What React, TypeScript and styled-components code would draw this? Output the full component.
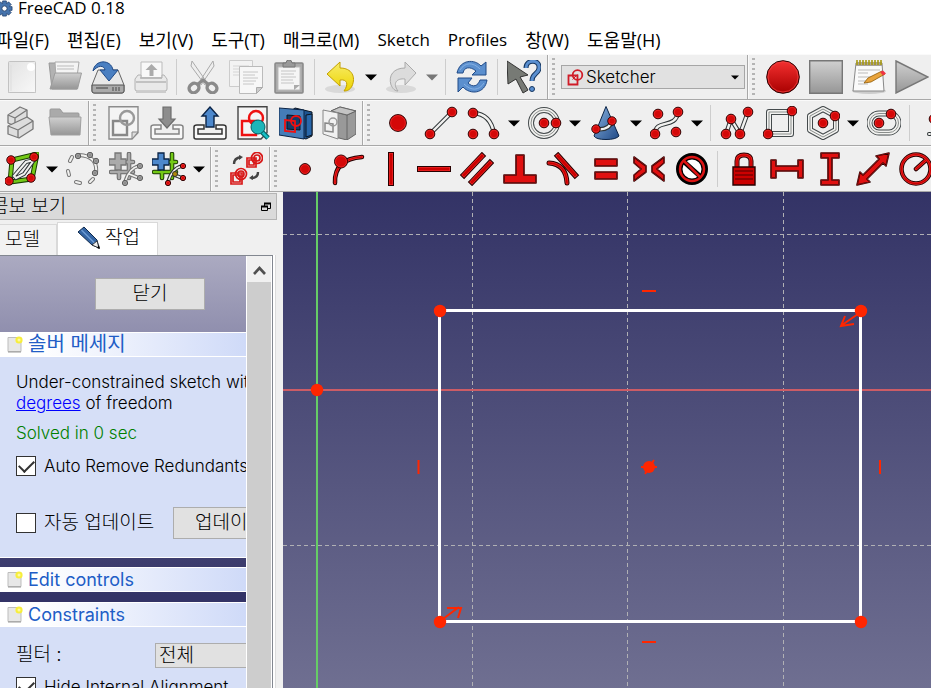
import React from "react";
import styled, { createGlobalStyle, css } from "styled-components";

const GlobalStyle = createGlobalStyle`
  * { box-sizing: border-box; }
  html, body, #root { height: 100%; margin: 0; }
  body { overflow: hidden; background: #fff; }
  button, input, select { font: inherit; color: inherit; margin: 0; }
`;

const uiFont = `"Open Sans", "Noto Sans CJK KR", sans-serif`;
const panelFont = `Inter, "Noto Sans CJK KR", sans-serif`;

const Window = styled.div`
  display: flex;
  flex-direction: column;
  height: 100vh;
  overflow: hidden;
  color: #000;
  font-family: ${uiFont};
  font-size: 17px;
`;

const TitleBar = styled.header`
  display: flex;
  align-items: center;
  flex: none;
  gap: 5px;
  height: 26px;
  padding-bottom: 10px;
  margin-left: -4px;
  line-height: 16px;
  white-space: nowrap;
`;

const MenuBar = styled.nav`
  display: flex;
  align-items: center;
  flex: none;
  gap: 18px;
  height: 28px;
  margin-left: -4px;
  white-space: nowrap;
`;

const MenuItem = styled.button<{ $latin?: boolean }>`
  border: 0;
  padding: 0;
  background: none;
  font-size: ${(p) => (p.$latin ? "17px" : "18px")};
  line-height: 24px;
  white-space: nowrap;
`;

const ToolRow = styled.div`
  display: flex;
  flex: none;
  height: 46px;
  overflow: hidden;
  background: #efefef;
  border-bottom: 1px solid #a8a8a8;
  border-top: 1px solid #fafafa;
`;

const Toolbar = styled.div<{ $last?: boolean }>`
  display: flex;
  flex: none;
  align-items: center;
  padding-right: 2px;
  ${(p) => !p.$last && css`border-right: 1px solid #a8a8a8; box-shadow: 1px 0 #fafafa;`}
`;

const Handle = styled.span`
  flex: none;
  width: 3px;
  height: 38px;
  margin: 0 6px 0 4px;
  background: repeating-linear-gradient(#b4b4b4 0 2px, transparent 2px 5px);
`;

const ToolButton = styled.button`
  display: flex;
  flex: none;
  align-items: center;
  justify-content: center;
  width: 43px;
  height: 44px;
  padding: 0;
  border: 0;
  background: none;
`;

const ArrowButton = styled(ToolButton)`
  width: 18px;
`;

const Divider = styled.span`
  flex: none;
  width: 1px;
  height: 36px;
  margin: 0 4px;
  background: #cdcdcd;
`;

const WorkbenchBox = styled.label`
  display: flex;
  align-items: center;
  width: 184px;
  height: 24px;
  padding: 0 5px;
  border: 1px solid #a6a6a6;
  background: #e1e1e1;
  font-family: ${panelFont};
  font-weight: 300;
`;

const PlainSelect = styled.select`
  flex: 1;
  min-width: 0;
  height: 22px;
  padding: 0 2px;
  border: 0;
  appearance: none;
  background: none;
`;

const Workspace = styled.main`
  display: flex;
  flex: 1;
  min-height: 0;
`;

const Dock = styled.aside`
  display: flex;
  flex: none;
  flex-direction: column;
  width: 283px;
  padding-top: 1px;
  background: #f0f0f0;
  font-family: ${panelFont};
  font-weight: 300;
  white-space: nowrap;
`;

const DockTitle = styled.div`
  display: flex;
  flex: none;
  align-items: center;
  justify-content: space-between;
  height: 27px;
  margin-right: 6px;
  padding-right: 5px;
  border: 1px solid #b4b4b4;
  border-left: 0;
  background: #dadada;
`;

const DockName = styled.span`
  margin-left: -9px;
  font-size: 19px;
  line-height: 22px;
`;

const IconButton = styled.button`
  display: flex;
  padding: 0;
  border: 0;
  background: none;
`;

const Tabs = styled.div`
  display: flex;
  flex: none;
  align-items: flex-end;
  height: 35px;
`;

const Tab = styled.button<{ $active?: boolean }>`
  display: flex;
  align-items: center;
  gap: 4px;
  height: ${(p) => (p.$active ? "33px" : "31px")};
  padding: ${(p) => (p.$active ? "0 17px 2px 19px" : "0 16px 0 5px")};
  border: 1px solid #d9d9d9;
  border-bottom: 0;
  border-left-width: ${(p) => (p.$active ? "1px" : "0")};
  background: ${(p) => (p.$active ? "#fff" : "#f2f2f2")};
  font-size: 19px;
  line-height: 24px;
`;

const Pane = styled.div`
  display: flex;
  flex: 1;
  min-height: 0;
  margin-right: 7px;
  padding-right: 2px;
  border-right: 1px solid #dcdcdc;
  background: #fff;
`;

const ScrollFrame = styled.div`
  display: flex;
  flex: 1;
  min-width: 0;
  border-top: 1px solid #828790;
  border-right: 1px solid #828790;
`;

const TaskList = styled.div`
  flex: 1;
  min-width: 0;
  overflow: hidden;
  border-right: 1px solid #fff;
  background: linear-gradient(#abaac1 0, #908fae 76px, #3e3e6f 302px, #333366 340px);
`;

const ScrollBar = styled.div`
  display: flex;
  flex: none;
  flex-direction: column;
  width: 25px;
  background: #cdcdcd;
  border-right: 1px solid #fff;
`;

const ScrollUp = styled.button`
  display: flex;
  align-items: center;
  justify-content: center;
  height: 26px;
  padding: 4px 0 0;
  border: 0;
  background: #f0f0f0;
`;

const CloseArea = styled.div`
  display: flex;
  justify-content: center;
  height: 76px;
  padding: 22px 0 0 54px;
`;

const PushButton = styled.button<{ $wide?: boolean }>`
  flex: none;
  width: ${(p) => (p.$wide ? "114px" : "110px")};
  height: 32px;
  padding: 0;
  border: 1px solid #adadad;
  background: #e1e1e1;
  font-size: 19px;
  line-height: 24px;
`;

const SectionHeader = styled.h2<{ $hangul?: boolean }>`
  display: flex;
  align-items: center;
  gap: 5px;
  height: 25px;
  margin: 0;
  padding-left: 7px;
  border-top: 1px solid #fff;
  border-bottom: 1px solid #fff;
  background: linear-gradient(90deg, #fff 15%, #cfdaf8);
  color: #215dc6;
  font-size: ${(p) => (p.$hangul ? "20px" : "18px")};
  font-weight: 400;
  line-height: 23px;
`;

const SectionBody = styled.div`
  padding: 15px 0 0 16px;
  overflow: hidden;
  border-bottom: 1px solid #fff;
  background: #d6dff7;
`;

const SolverBody = styled(SectionBody)`
  height: 201px;
  margin-bottom: 9px;
`;

const EditSection = styled.div`
  margin-bottom: 10px;
`;

const Message = styled.p`
  margin: 0 0 9px;
  line-height: 21px;
`;

const Solved = styled(Message)`
  margin-bottom: 12px;
  color: #008000;
`;

const Link = styled.a`
  color: #0000ff;
`;

const FormRow = styled.div<{ $gap?: number }>`
  display: flex;
  align-items: center;
  height: ${(p) => (p.$gap ? "32px" : "20px")};
  margin-top: ${(p) => p.$gap ?? 0}px;
`;

const CheckLabel = styled.label<{ $hangul?: boolean }>`
  display: flex;
  flex: none;
  align-items: center;
  gap: 8px;
  width: 157px;
  font-size: ${(p) => (p.$hangul ? "19px" : "17px")};
  line-height: 24px;
`;

const CheckBox = styled.input`
  display: grid;
  flex: none;
  place-items: center;
  width: 20px;
  height: 20px;
  border: 1px solid #333;
  appearance: none;
  background: #fff;
  &:checked::after {
    content: "";
    width: 13px;
    height: 7px;
    margin-bottom: 4px;
    border: solid #333;
    border-width: 0 0 2px 2px;
    transform: rotate(-45deg);
  }
`;

const FilterRow = styled.div`
  display: grid;
  grid-template-columns: 139px 160px;
  align-items: center;
  height: 26px;
  margin-bottom: 9px;
  font-size: 19px;
  line-height: 24px;
`;

const FilterSelect = styled.select`
  height: 25px;
  padding: 0 3px;
  border: 1px solid #adadad;
  border-radius: 0;
  appearance: none;
  background: #e1e1e1;
`;

const View = styled.section`
  flex: 1;
  min-width: 0;
  background: linear-gradient(#333366, #6f6f91);
`;

const Drawing = styled.svg`
  display: block;
  width: 100%;
  height: 100%;
`;

/* ---------- drawing helpers ---------- */

const Svg = ({ size = 34, children }: { size?: number; children: React.ReactNode }) => (
  <svg width={size} height={size} viewBox="0 0 34 34" fill="none" aria-hidden="true">
    {children}
  </svg>
);

const Dot = ({ x, y, r = 4.8, grey }: { x: number; y: number; r?: number; grey?: boolean }) => (
  <>
    <circle cx={x} cy={y} r={r} fill={grey ? "#8c8c8c" : "#d40808"} stroke={grey ? "#5c5c5c" : "#280000"} />
    <circle cx={x} cy={y} r={r - 1} stroke={grey ? "#a0a0a0" : "#ef2929"} strokeWidth=".8" />
  </>
);

const Tube = ({ d, dark = "#2e3436", light = "#f2f2f0", w = 4.4 }: { d: string; dark?: string; light?: string; w?: number }) => (
  <>
    <path d={d} stroke={dark} strokeWidth={w} strokeLinecap="round" />
    <path d={d} stroke={light} strokeWidth={w - 2} strokeLinecap="round" />
  </>
);

/* A band made of two parallel thin tubes, as in the closed-curve tools. */
const Band = ({ d }: { d: string }) => (
  <>
    <path d={d} stroke="#444a4c" strokeWidth="6" strokeLinejoin="round" />
    <path d={d} stroke="#f2f2f0" strokeWidth="4" strokeLinejoin="round" />
    <path d={d} stroke="#8a8e8c" strokeWidth="1" />
  </>
);

const Bar = ({ d, w = 6, round }: { d: string; w?: number; round?: boolean }) => (
  <>
    <path d={d} stroke="#280000" strokeWidth={w} strokeLinecap={round ? "round" : "square"} />
    <path d={d} stroke="#ef2929" strokeWidth={w - 2} strokeLinecap={round ? "round" : "square"} />
    <path d={d} stroke="#cc0000" strokeWidth={w - 3.4} strokeLinecap={round ? "round" : "square"} />
  </>
);

const Solid = ({ d }: { d: string }) => (
  <>
    <path d={d} fill="#e01010" stroke="#280000" strokeWidth="1.6" strokeLinejoin="round" />
    <path d={d} stroke="#ef2929" strokeWidth=".4" />
  </>
);

const Caret = ({ muted }: { muted?: boolean }) => (
  <svg width="12" height="7" viewBox="0 0 12 7" aria-hidden="true">
    <path d="M0 .5h12L6 6.5z" fill={muted ? "#777" : "#000"} />
  </svg>
);

const Gradients = () => (
  <defs>
    <linearGradient id="grey" x1="0" y1="0" x2="0" y2="1"><stop stopColor="#d0d0d0" /><stop offset="1" stopColor="#969696" /></linearGradient>
    <linearGradient id="pale" x1="0" y1="0" x2="1" y2="1"><stop stopColor="#e2e2e2" /><stop offset="1" stopColor="#f8f8f8" /></linearGradient>
    <linearGradient id="red" x1="0" y1="0" x2="0" y2="1"><stop stopColor="#f43030" /><stop offset="1" stopColor="#a80000" /></linearGradient>
    <linearGradient id="blue" x1="0" y1="0" x2="1" y2="1"><stop stopColor="#8ab4e2" /><stop offset="1" stopColor="#204a87" /></linearGradient>
    <linearGradient id="yellow" x1="0" y1="0" x2="0" y2="1"><stop stopColor="#f7ec6a" /><stop offset="1" stopColor="#edd400" /></linearGradient>
  </defs>
);

/* ---------- file and edit icons ---------- */

const PageIcon = () => (
  <Svg>
    <path d="M3 31h28v2H3z" fill="#ccc" />
    <rect x="3.5" y="1.5" width="27" height="31" rx="1" fill="url(#pale)" stroke="#c2c2c2" />
    <path d="M6 5v26" stroke="#ddd" />
    <circle cx="26" cy="7" r="4" fill="#fff" />
  </Svg>
);
const FolderOpenIcon = () => (
  <Svg>
    <path d="M1 3h8l2 3h18v23H4z" fill="#b2b2b2" stroke="#999" />
    <path d="M7 2h24l-2 15H8z" fill="#f4f4f4" stroke="#aaa" />
    <path d="M9 6h17M9 9h17" stroke="#bbb" />
    <path d="M7 13h26.500l-4 16H2z" fill="url(#grey)" stroke="#9c9c9c" />
  </Svg>
);
const SaveIcon = () => (
  <Svg>
    <path d="M7 10h20l6 15v6q0 2-2 2H3q-2 0-2-2v-6z" fill="#e8e8e8" stroke="#666" />
    <path d="M1 25h32v6q0 2-2 2H3q-2 0-2-2z" fill="#aaa" stroke="#555" />
    <path d="M5 28h12M22 27v4M25 27v4M28 27v4" stroke="#666" strokeWidth="1.4" />
    <path d="M2 11C4-1 20-1 22 10h5l-9 11-9-11h5c-1-5-7-5-12 1z" fill="#4a7fc1" stroke="#204a87" />
  </Svg>
);
const PrintIcon = () => (
  <Svg>
    <path d="M7 2h21v16H7z" fill="#f8f8f8" stroke="#bbb" />
    <path d="M4 15h3v3h21v-3h2l3 4v10q0 2-2 2H3q-2 0-2-2V19z" fill="#e9e9e9" stroke="#b2b2b2" />
    <path d="M17.500 4l6 6h-4v6h-4v-6h-4z" fill="#ababab" />
    <path d="M2 22h30M6 18h22" stroke="#b5b5b5" strokeWidth="1.500" />
    <path d="M2 32h30" stroke="#ccc" strokeWidth="2" />
  </Svg>
);
const CutIcon = () => (
  <Svg>
    <path d="M6 1l16 23-3 1L5 6zM27 1L12 24l3 1L28 6z" fill="#eee" stroke="#aaa" />
    <ellipse cx="8" cy="28" rx="5" ry="4.500" stroke="#8a8a8a" strokeWidth="3.400" transform="rotate(-35 8 28)" />
    <ellipse cx="26" cy="28" rx="5" ry="4.500" stroke="#8a8a8a" strokeWidth="3.400" transform="rotate(35 26 28)" />
    <path d="M12 24l5-4 5 4" stroke="#8a8a8a" strokeWidth="3" />
  </Svg>
);
const CopyIcon = () => (
  <Svg>
    <path d="M.5.5h23v26H.5z" fill="#f3f3f3" stroke="#ccc" />
    <path d="M4 6h16M4 9h8M4 12h6M4 15h6" stroke="#d5d5d5" />
    <path d="M10.500 6.500h23v21l-6 6h-17z" fill="#f7f7f7" stroke="#bbb" />
    <path d="M27.500 33.500v-6h6z" fill="#ccc" stroke="#aaa" />
    <path d="M14 12h15M14 15h12M14 18h15M14 21h13M14 24h11" stroke="#c6c6c6" />
  </Svg>
);
const PasteIcon = () => (
  <Svg>
    <rect x="3" y="3" width="28" height="30" rx="1" fill="#aaa" stroke="#888" strokeWidth="1.5" />
    <path d="M6 7h22v23H6z" fill="#f5f5f5" stroke="#bbb" />
    <path d="M11 7V3h3q0-3 3-3t3 3h3v4z" fill="#999" stroke="#777" />
    <path d="M9 11h15M9 14h13M9 17h15M9 20h12M9 23h13" stroke="#c5c5c5" />
    <path d="M22 30v-5h6z" fill="#aaa" />
  </Svg>
);
const UndoIcon = ({ muted }: { muted?: boolean }) => (
  <Svg>
    <ellipse cx="16" cy="29" rx="15" ry="4" fill="#d9d9d9" />
    <path
      d={muted ? "M31 13L20 2v6C9 8 3 15 6 25c2 4 4 6 7 6-6-8-1-13 7-12v6z" : "M3 14L16 2v6c12 0 16 9 12 18-2 4-5 5-8 5 5-7 3-12-4-11v6z"}
      fill={muted ? "#dcdcdc" : "url(#yellow)"}
      stroke={muted ? "#aaa" : "#c4a000"}
    />
  </Svg>
);
const RefreshIcon = () => (
  <Svg>
    <path d="M2 13C5-1 20-1 26 6l5-4v13H17l4-4c-6-5-12-4-13 2z" fill="#5b8fce" stroke="#204a87" />
    <path d="M32 20c-2 14-17 15-24 7l-5 5V18h14l-4 5c5 5 10 3 12-3z" fill="#5b8fce" stroke="#204a87" />
    <path d="M5 10c5-8 13-8 20-1M29 23c-5 8-13 8-20 1" stroke="#86b1e4" />
  </Svg>
);
const WhatsThisIcon = () => (
  <Svg>
    <path d="M0 1l21 14-8 2 8 13-5 3-7-14-8 5z" fill="#777a75" stroke="#333" />
    <path d="M19 8c0-9 14-9 13 0 0 6-7 5-7 13" stroke="#16365f" strokeWidth="5" />
    <path d="M19 8c0-9 14-9 13 0 0 6-7 5-7 13" stroke="#5a8fd0" strokeWidth="3" />
    <circle cx="25" cy="29" r="2.500" fill="#5a8fd0" stroke="#16365f" />
  </Svg>
);
const RecordIcon = () => <Svg><circle cx="17" cy="17" r="16.300" fill="url(#red)" stroke="#280000" /><circle cx="17" cy="17" r="15" stroke="#ef4040" strokeWidth=".8" /></Svg>;
const StopIcon = () => <Svg><path d="M.7.7h32.600v32.600H.7z" fill="url(#grey)" stroke="#777" strokeWidth="1.400" /></Svg>;
const PlayIcon = () => <Svg><path d="M1 1l32 16L1 33z" fill="url(#grey)" stroke="#777" strokeWidth="1.400" /></Svg>;
const NotesIcon = () => (
  <Svg>
    <ellipse cx="17" cy="31" rx="17" ry="3" fill="#ccc" />
    <path d="M4 3h26l2 28H1z" fill="#fafafa" stroke="#888" />
    <path d="M4 2h26v4H4z" fill="#a8a29a" />
    {[5, 8, 11, 14, 17, 20, 23, 26, 29].map((x) => <path key={x} d={`M${x} 0v5`} stroke="#a89a10" strokeWidth="1.600" />)}
    <path d="M6 10h22M6 13h10M6 17h20M6 21h10M6 24h10" stroke="#bbb" />
    <path d="M12 23l4-5 14-7 3 3-14 8z" fill="#e9a43c" stroke="#8f5902" strokeWidth=".8" />
    <path d="M28 12l3-1.500 3 3-3 2z" fill="#e34" />
  </Svg>
);

/* ---------- sketch icons ---------- */

const PartIcon = () => (
  <Svg>
    <g fill="#ddd" stroke="#777" strokeWidth="1.300" strokeLinejoin="round">
      <path d="M3 9l12-8 7 3v9l-12 7-7-3z" /><path d="M3 9l7 3 12-8M10 12v8" />
      <path d="M3 20l19-9 6 4v8l-14 9-11-4z" /><path d="M3 20l10 4 15-9M13 24v8" />
    </g>
  </Svg>
);
const FolderIcon = () => (
  <Svg>
    <path d="M2 4q0-1 1-1h9l3 4h15q1 0 1 1v4H2z" fill="#aaa" stroke="#999" />
    <path d="M1 11h32l-1 18H3z" fill="url(#grey)" stroke="#a0a0a0" />
  </Svg>
);
const SketchPage = ({ red }: { red?: boolean }) => (
  <>
    <path d="M2 .7h29v26l-6 6.300H2z" fill="#f4f4f4" stroke={red ? "#444" : "#8c8c8c"} strokeWidth="1.400" />
    {!red && <path d="M25 33v-7h6z" fill="#ddd" stroke="#888" />}
    <path d="M6 15h14v14H6z" stroke={red ? "#e11" : "#888"} strokeWidth="2.400" />
    <circle cx="20" cy="12" r="7" stroke={red ? "#e11" : "#999"} strokeWidth="2.400" />
  </>
);
const NewSketchIcon = () => <Svg><SketchPage /></Svg>;
const ViewSketchIcon = () => (
  <Svg>
    <SketchPage red />
    <path d="M26 26l6 6" stroke="#065f63" strokeWidth="5" /><path d="M26 26l6 6" stroke="#17bfc5" strokeWidth="2.500" />
    <circle cx="22" cy="21" r="7" fill="#1cb5b9" stroke="#065f63" />
  </Svg>
);
const TrayIcon = ({ up }: { up?: boolean }) => (
  <Svg>
    <path d="M11 19H4q-3 0-3 2v10q0 2 2 2h28q2 0 2-2V21q0-2-3-2h-7v4h6v5H5v-5h6z" fill="#f8f8f8" stroke={up ? "#333" : "#858585"} strokeWidth="1.500" />
    {up
      ? <path d="M17 1l8 9h-4v11h-8V10H9z" fill="#4d88cc" stroke="#0b2447" strokeWidth="1.400" />
      : <path d="M17 22l8-9h-4V1h-8v12H9z" fill="#8d8d8d" stroke="#6d6d6d" strokeWidth="1.200" />}
  </Svg>
);
const ViewSectionIcon = () => (
  <Svg>
    <path d="M8 8l8-6 17 4v24l-6 3-19-5z" fill="#1d5490" stroke="#0b1521" />
    <path d="M0 2l25 2v29L0 29z" fill="#457db8" stroke="#0b2447" />
    <path d="M8 9l13 1v14L8 23z" fill="#163b66" stroke="#0b1521" />
    <path d="M6 14l10 1v11L6 25z" stroke="#f01010" strokeWidth="1.800" /><circle cx="17" cy="15" r="5" stroke="#f01010" strokeWidth="1.800" />
    <path d="M27 9l6-1v21l-6 2z" fill="#2867aa" stroke="#0b1521" />
  </Svg>
);
const MapSketchIcon = () => (
  <Svg>
    <path d="M9 5l9-4 16 4v23l-9 6-16-4z" fill="#999" stroke="#666" />
    <path d="M9 5l16 4v25M25 9l9-4" stroke="#666" /><path d="M9 5l9-4 16 4-9 4z" fill="#c4c4c4" stroke="#666" />
    <path d="M1 4l15 3v26L1 28z" fill="#f1f1f1" stroke="#888" />
    <path d="M3 17l8 1v8l-8-1z" stroke="#888" strokeWidth="1.500" /><circle cx="11" cy="16" r="4" stroke="#999" strokeWidth="1.500" />
  </Svg>
);
const PointIcon = () => <Svg><Dot x={17} y={17} r={8.400} /></Svg>;
const LineIcon = () => <Svg><Tube d="M6 28L28 6" /><Dot x={6} y={28} /><Dot x={28} y={6} /></Svg>;
const ArcIcon = () => <Svg><Tube d="M6 7Q24 8 27 28" /><Dot x={6} y={7} /><Dot x={6} y={28} /><Dot x={27} y={28} /></Svg>;
const CircleIcon = () => <Svg><Band d="M3 17a13 13 0 1 0 26 0a13 13 0 1 0-26 0" /><Dot x={16} y={17} /><Dot x={28} y={17} /></Svg>;
const ConicIcon = () => (
  <Svg>
    <path d="M17 .5L5 30q2 3.500 12 3.500T30 30z" fill="url(#blue)" stroke="#0b2447" />
    <Tube d="M7 23q13 2 16-8" /><Dot x={7} y={23} r={4.200} /><Dot x={23} y={15} r={4.200} />
  </Svg>
);
const SplineIcon = () => <Svg><Tube d="M5 28C5 12 26 24 28 6" /><Dot x={8} y={8} /><Dot x={28} y={6} /><Dot x={5} y={28} /><Dot x={26} y={26} /></Svg>;
const PolylineIcon = () => <Svg><Tube d="M6 28l5-15 9 15 8-22" /><Dot x={6} y={28} /><Dot x={11} y={13} /><Dot x={20} y={28} /><Dot x={28} y={6} /></Svg>;
const RectIcon = () => <Svg><Band d="M6 6h22v22H6z" /><Dot x={29} y={5} /><Dot x={5} y={28} /></Svg>;
const PolygonIcon = () => <Svg><Band d="M17 3l13 7v14l-13 7-13-7V10z" /><Dot x={17} y={17} /><Dot x={29} y={10} /></Svg>;
const SlotIcon = () => <Svg><Band d="M12 7.500h10a9.500 9.500 0 0 1 0 19H12a9.500 9.500 0 0 1 0-19z" /><Dot x={12} y={17} /><Dot x={24} y={8} /></Svg>;
const TrimIcon = () => <Svg><Tube d="M15 2v10l11 12" /><Tube d="M15 23v2M11 28h-1M20 28h2M15 31v1" w={4} /><Dot x={15} y={13} /></Svg>;

const ShapeIcon = () => (
  <Svg>
    <path d="M7 8l25-6-5 25-22 3z" stroke="#173b00" strokeWidth="5" /><path d="M7 8l25-6-5 25-22 3z" stroke="#73c916" strokeWidth="3" />
    <Tube d="M9 24l12-14 8-2-10 14-8 4z" w={4} />
    <Dot x={6} y={8} r={4.200} /><Dot x={29} y={5} r={4.200} /><Dot x={4} y={29} r={4.200} /><Dot x={26} y={26} r={4.200} />
  </Svg>
);
const RingIcon = () => (
  <Svg>
    <Tube d="M13 3Q32 4 30 21M4 9l2-4M2 19l1 4M10 30l4 1M24 30l3-3" dark="#777" w={4} />
    <Dot grey x={12} y={4} r={2.700} /><Dot grey x={24} y={3} r={2.700} /><Dot grey x={30} y={9} r={2.700} /><Dot grey x={29} y={21} r={2.700} />
  </Svg>
);
const GridPlus = ({ muted }: { muted?: boolean }) => (
  <Svg>
    <path d="M10 4v22M20 2v24M2 10h22M2 20h22" stroke={muted ? "#6a6a6a" : "#1c3a06"} strokeWidth="4.600" strokeLinecap="round" />
    <path d="M10 4v22M20 2v24M2 10h22M2 20h22" stroke={muted ? "#aaa" : "#73c916"} strokeWidth="2.600" strokeLinecap="round" />
    <path d="M6 1h6v6h5v6h-5v5H6v-5H0V7h6z" fill={muted ? "#aaa" : "#4d88cc"} stroke={muted ? "#777" : "#0b2447"} strokeWidth="1.300" />
    <Tube d="M16 30q4-14 14-16M20 22l10 4" w={3.600} dark={muted ? "#777" : "#2e3436"} />
    <Dot grey={muted} x={16} y={31} r={2.600} /><Dot grey={muted} x={31} y={14} r={2.600} /><Dot grey={muted} x={31} y={26} r={2.600} />
    {!muted && <circle cx="23" cy="22" r="2.500" fill="#b08a0c" stroke="#333" />}
  </Svg>
);
const SwitchSpaceIcon = () => (
  <Svg>
    <g stroke="#d81818" strokeWidth="1.700">
      <path d="M18 6h9v9h-9zM20 8h5v5h-5z" /><circle cx="28" cy="6" r="5.500" /><circle cx="28" cy="6" r="3" />
      <path d="M2 21h11v11H2zM4 23h7v7H4z" /><circle cx="12" cy="22" r="5.500" /><circle cx="12" cy="22" r="3" />
    </g>
    <path d="M5 12q0-6 7-7M29 20q0 6-7 6" stroke="#444" strokeWidth="2.400" />
    <path d="M10 3l4 2-4 3zM24 23l-4 3 4 2z" fill="#444" />
  </Svg>
);

const CoincidentIcon = () => <Svg><Dot x={17} y={17} r={5.400} /></Svg>;
const OnObjectIcon = () => <Svg><Bar round w={4.500} d="M4 31Q3 7 31 5" /><Dot x={10} y={9.500} r={6.500} /></Svg>;
const VerticalIcon = () => <Svg><Bar d="M17 3v28" /></Svg>;
const HorizontalIcon = () => <Svg><Bar d="M3 17h28" /></Svg>;
const ParallelIcon = () => <Svg><Bar d="M4 23L22 4M12 30L30 11" /></Svg>;
const PerpendicularIcon = () => <Svg><Solid d="M13 3h8v20h12v8H1v-8h12z" /></Svg>;
const TangentIcon = () => <Svg><Bar d="M12 4l17 19" /><Bar round w={5} d="M3 11Q20 12 21 31" /></Svg>;
const EqualIcon = () => <Svg><Solid d="M6 7h22v7H6zM6 20h22v7H6z" /></Svg>;
const SymmetricIcon = () => <Svg><Solid d="M2 5l12 9v6L2 29v-6l7-6-7-6zM32 5l-12 9v6l12 9v-6l-7-6 7-6z" /></Svg>;
const BlockIcon = () => (
  <Svg>
    <circle cx="17" cy="17" r="14.500" fill="#fff" stroke="#000" strokeWidth="3" /><circle cx="17" cy="17" r="12" stroke="#000" strokeWidth="5" />
    <path d="M7 8l20 18" stroke="#000" strokeWidth="5" /><circle cx="17" cy="17" r="12" stroke="#dc1414" strokeWidth="2.500" /><path d="M8 8l18 18" stroke="#dc1414" strokeWidth="2.500" />
  </Svg>
);
const LockIcon = () => (
  <Svg>
    <Bar w={5} d="M10 15V9q0-6 7-6t7 6v6" />
    <path d="M6 15h22v18H6z" fill="#cc0000" stroke="#280000" strokeWidth="1.400" /><path d="M8 19h18M8 23h18M8 27h18" stroke="#790000" strokeWidth="1.500" />
  </Svg>
);
const HDistanceIcon = () => <Svg><Solid d="M1 8h5v6h22V8h5v18h-5v-7H6v7H1z" /></Svg>;
const VDistanceIcon = () => <Svg><Solid d="M8 1v5h7v22H8v5h18v-5h-7V6h7V1z" /></Svg>;
const DistanceIcon = () => <Svg><Solid d="M33 1l-3 13-3-3-16 16 3 3-13 3 3-13 3 3L23 7l-3-3z" /></Svg>;
const RadiusIcon = () => <Svg><Bar round w={4.500} d="M2.500 17a14.500 14.500 0 1 0 29 0a14.500 14.500 0 1 0-29 0M17 17l10-9" /></Svg>;

const SketcherLogo = () => (
  <svg width="17" height="17" viewBox="0 0 17 17" fill="none" stroke="#d01c28" strokeWidth="1.800" aria-hidden="true">
    <path d="M1.500 6.500h9v9h-9z" /><circle cx="10.500" cy="6" r="4.800" /><path d="M5.500 10.500l5-5" strokeWidth="1" />
  </svg>
);
const GearIcon = () => (
  <svg width="17" height="17" viewBox="-9 -9 18 18" aria-hidden="true">
    <Gradients />
    {[0, 45, 90, 135].map((a) => <path key={a} d="M-2-8h4V8h-4z" transform={`rotate(${a})`} fill="#4674ad" stroke="#1f3f6b" strokeWidth=".8" />)}
    <circle r="5.500" fill="#4674ad" /><circle r="2.800" fill="#fff" stroke="#1f3f6b" />
  </svg>
);
const PencilIcon = () => (
  <svg width="24" height="24" viewBox="0 0 24 24" aria-hidden="true">
    <path d="M1 6l6-5 13 13 2 8-7-3z" fill="#3465a4" stroke="#102a4c" /><path d="M4.500 4l13 13" stroke="#6d9bd3" strokeWidth="1.500" />
    <path d="M15 19l5-4 2 7z" fill="#eee" stroke="#222" strokeWidth=".8" /><path d="M20 22l2-3 1 4z" fill="#000" />
  </svg>
);
const FloatIcon = () => (
  <svg width="10" height="10" viewBox="0 0 10 10" fill="none" stroke="#000" aria-hidden="true">
    <path d="M3.500 4V1.500h6v5H7" /><path d="M3 1.500h7M0 4.500h7" strokeWidth="2" /><path d="M.5 4.500h6v4h-6z" />
  </svg>
);
const NoteIcon = () => (
  <svg width="16" height="17" viewBox="0 0 16 17" aria-hidden="true">
    <path d="M1 1.500h13v14H1z" fill="#e7e7e7" stroke="#bdbdbd" /><path d="M1 16h13" stroke="#999" />
    <circle cx="12" cy="4" r="3.600" fill="#f7ee3c" /><circle cx="12" cy="4" r="1.500" fill="#fff9a0" />
  </svg>
);

/* ---------- toolbars ---------- */

type Item = [label: string, icon: React.ReactNode] | "arrow" | "muted" | "divider";

const Tools = ({ items }: { items: Item[] }) => (
  <>
    {items.map((item, i) => {
      if (item === "divider") return <Divider key={i} />;
      if (item === "arrow" || item === "muted")
        return <ArrowButton key={i} type="button" aria-label="More"><Caret muted={item === "muted"} /></ArrowButton>;
      return <ToolButton key={i} type="button" aria-label={item[0]}>{item[1]}</ToolButton>;
    })}
  </>
);

const fileTools: Item[] = [
  ["New", <PageIcon />], ["Open", <FolderOpenIcon />], ["Save", <SaveIcon />], ["Print", <PrintIcon />], "divider",
  ["Cut", <CutIcon />], ["Copy", <CopyIcon />], ["Paste", <PasteIcon />], "divider",
  ["Undo", <UndoIcon />], "arrow", ["Redo", <UndoIcon muted />], "muted", "divider",
  ["Refresh", <RefreshIcon />], "divider", ["What's this?", <WhatsThisIcon />],
];
const macroTools: Item[] = [["Record macro", <RecordIcon />], ["Stop macro", <StopIcon />], ["Macros", <NotesIcon />], ["Run macro", <PlayIcon />]];
const structureTools: Item[] = [["Create part", <PartIcon />], ["Create group", <FolderIcon />]];
const sketchTools: Item[] = [
  ["New sketch", <NewSketchIcon />], ["Edit sketch", <TrayIcon />], ["Leave sketch", <TrayIcon up />],
  ["View sketch", <ViewSketchIcon />], ["View section", <ViewSectionIcon />], ["Map sketch", <MapSketchIcon />],
];
const geometryTools: Item[] = [
  ["Point", <PointIcon />], ["Line", <LineIcon />], ["Arc", <ArcIcon />], "arrow", ["Circle", <CircleIcon />], "arrow",
  ["Conic", <ConicIcon />], "arrow", ["B-spline", <SplineIcon />], "arrow", "divider",
  ["Polyline", <PolylineIcon />], ["Rectangle", <RectIcon />], ["Polygon", <PolygonIcon />], "arrow", ["Slot", <SlotIcon />], "divider",
  ["Trim", <TrimIcon />],
];
const splineTools: Item[] = [
  ["Close shape", <ShapeIcon />], "arrow", ["Select elements", <RingIcon />], ["Clone", <GridPlus muted />], ["Copy geometry", <GridPlus />], "arrow",
];
const constraintTools: Item[] = [
  ["Coincident", <CoincidentIcon />], ["Point on object", <OnObjectIcon />], ["Vertical", <VerticalIcon />], ["Horizontal", <HorizontalIcon />],
  ["Parallel", <ParallelIcon />], ["Perpendicular", <PerpendicularIcon />], ["Tangent", <TangentIcon />], ["Equal", <EqualIcon />],
  ["Symmetric", <SymmetricIcon />], ["Block", <BlockIcon />], "divider", ["Lock", <LockIcon />],
  ["Horizontal distance", <HDistanceIcon />], ["Vertical distance", <VDistanceIcon />], ["Distance", <DistanceIcon />], ["Radius", <RadiusIcon />],
];

const menus = ["파일(F)", "편집(E)", "보기(V)", "도구(T)", "매크로(M)", "Sketch", "Profiles", "창(W)", "도움말(H)"];

const SketchView = () => (
  <Drawing aria-label="Sketch">
    <g stroke="#b0b0b4" strokeDasharray="4 3">
      {[189.5, 344.5, 500.5].map((x) => <line key={x} x1={x} x2={x} y1="0" y2="100%" />)}
      {[42.5, 353.5].map((y) => <line key={y} x1="0" x2="100%" y1={y} y2={y} />)}
    </g>
    <line x1="0" x2="100%" y1="198" y2="198" stroke="#cc5c66" strokeWidth="2" />
    <line x1="34" x2="34" y1="0" y2="100%" stroke="#66cc66" strokeWidth="2" />
    <rect x="156.500" y="118.500" width="421" height="311" fill="none" stroke="#fff" strokeWidth="3" />
    <g fill="#ff2600">
      <circle cx="157" cy="119" r="6.200" /><circle cx="578" cy="119" r="6.200" />
      <circle cx="157" cy="430" r="6.200" /><circle cx="578" cy="430" r="6.200" /><circle cx="34" cy="198" r="6.200" />
      <circle cx="366" cy="275" r="6" />
    </g>
    <g fill="none" stroke="#ff2600" strokeWidth="2">
      <path d="M359 99h14M359 450h14M135.500 268v14M597 268v14" />
      <path d="M575 122l-16 11M562 124l-4 10 13-2M160 427l16-12M164 416h14l-3 10" />
      <path d="M358 275h16M362 282l9-14" />
    </g>
  </Drawing>
);

export default function App() {
  return (
    <Window>
      <GlobalStyle />
      <TitleBar><GearIcon />FreeCAD 0.18</TitleBar>
      <MenuBar>{menus.map((m) => <MenuItem key={m} type="button" $latin={/^[A-Z]/.test(m)}>{m}</MenuItem>)}</MenuBar>

      <ToolRow>
        <Toolbar><Tools items={fileTools} /></Toolbar>
        <Toolbar>
          <Handle />
          <WorkbenchBox>
            <SketcherLogo />
            <PlainSelect aria-label="Workbench"><option>Sketcher</option></PlainSelect>
            <svg width="8" height="5" viewBox="0 0 8 5" aria-hidden="true"><path d="M0 .5h8l-4 4z" /></svg>
          </WorkbenchBox>
        </Toolbar>
        <Toolbar $last><Handle /><Tools items={macroTools} /></Toolbar>
      </ToolRow>
      <ToolRow>
        <Toolbar><Tools items={structureTools} /></Toolbar>
        <Toolbar><Handle /><Tools items={sketchTools} /></Toolbar>
        <Toolbar $last><Handle /><Tools items={geometryTools} /></Toolbar>
      </ToolRow>
      <ToolRow>
        <Toolbar><Tools items={splineTools} /></Toolbar>
        <Toolbar><Handle /><Tools items={[["Switch virtual space", <SwitchSpaceIcon />]]} /></Toolbar>
        <Toolbar $last><Handle /><Tools items={constraintTools} /></Toolbar>
      </ToolRow>

      <Workspace>
        <Dock>
          <DockTitle>
            <DockName>콤보 보기</DockName>
            <IconButton type="button" aria-label="Float"><FloatIcon /></IconButton>
          </DockTitle>
          <Tabs role="tablist">
            <Tab role="tab" type="button">모델</Tab>
            <Tab role="tab" type="button" aria-selected $active><PencilIcon />작업</Tab>
          </Tabs>
          <Pane>
            <ScrollFrame>
              <TaskList>
                <CloseArea><PushButton type="button">닫기</PushButton></CloseArea>
                <SectionHeader $hangul><NoteIcon />솔버 메세지</SectionHeader>
                <SolverBody>
                  <Message>Under-constrained sketch with 2<br /><Link href="#degrees">degrees</Link> of freedom</Message>
                  <Solved>Solved in 0 sec</Solved>
                  <FormRow>
                    <CheckLabel><CheckBox type="checkbox" defaultChecked />Auto Remove Redundants</CheckLabel>
                  </FormRow>
                  <FormRow $gap={31}>
                    <CheckLabel $hangul><CheckBox type="checkbox" />자동 업데이트</CheckLabel>
                    <PushButton type="button" $wide>업데이트</PushButton>
                  </FormRow>
                </SolverBody>
                <EditSection><SectionHeader><NoteIcon />Edit controls</SectionHeader></EditSection>
                <SectionHeader><NoteIcon />Constraints</SectionHeader>
                <SectionBody>
                  <FilterRow>
                    <label htmlFor="filter">필터 :</label>
                    <FilterSelect id="filter"><option>전체</option></FilterSelect>
                  </FilterRow>
                  <FormRow>
                    <CheckLabel><CheckBox type="checkbox" defaultChecked />Hide Internal Alignment</CheckLabel>
                  </FormRow>
                </SectionBody>
              </TaskList>
              <ScrollBar>
                <ScrollUp type="button" aria-label="Scroll up">
                  <svg width="13" height="10" viewBox="0 0 13 10" fill="none" stroke="#505050" strokeWidth="2.600" aria-hidden="true"><path d="M1 8l5.500-6L12 8" /></svg>
                </ScrollUp>
              </ScrollBar>
            </ScrollFrame>
          </Pane>
        </Dock>
        <View><SketchView /></View>
      </Workspace>
    </Window>
  );
}
